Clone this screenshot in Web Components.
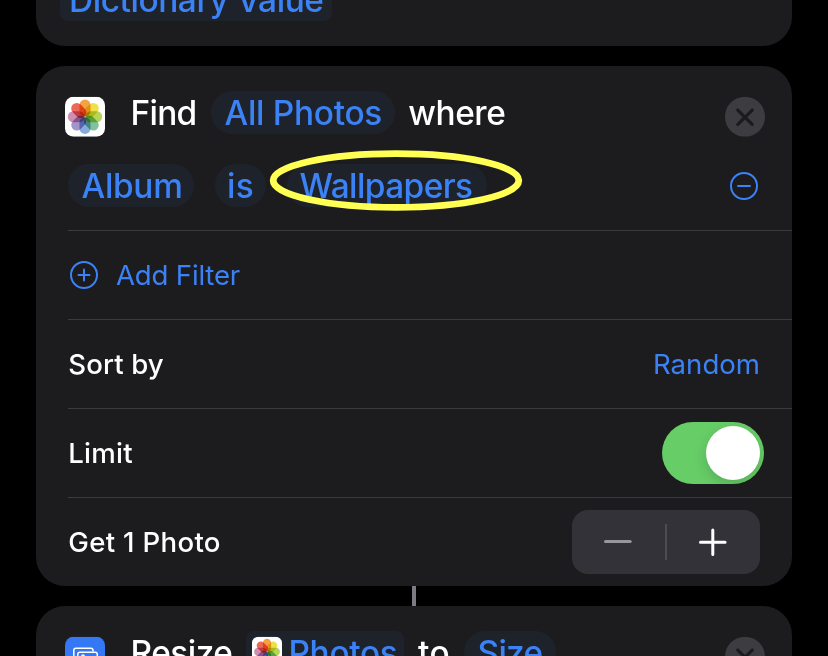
<!DOCTYPE html>
<html lang="en">
<head>
<meta charset="utf-8">
<title>Shortcut editor</title>
<style>
html,body{margin:0;height:100%;overflow:hidden;background:#000}
</style>
</head>
<body>
<shortcut-editor></shortcut-editor>
<script>
function define(name, html, setup) {
  const t = document.createElement('template');
  t.innerHTML = html;
  customElements.define(name, class extends HTMLElement {
    connectedCallback() {
      if (this.shadowRoot) return;
      this.attachShadow({mode: 'open'}).appendChild(t.content.cloneNode(true));
      if (setup) setup(this, this.shadowRoot);
    }
  });
}

/* Single line of text, tracked to fill the width given in "w". */
define('text-run', `
<style>
:host{display:block;white-space:nowrap;flex:none}
span{display:block;white-space:pre}
</style><span></span>`, (el, root) => {
  const s = root.querySelector('span');
  s.textContent = el.getAttribute('text');
  const w = parseFloat(el.getAttribute('w'));
  s.style.width = 'max-content';
  const natural = s.getBoundingClientRect().width;
  s.style.letterSpacing = ((w - natural) / s.textContent.length) + 'px';
  s.style.width = w + 'px';
});

/* Tappable value token. */
define('value-token', `
<style>
:host{display:flex;flex:none;align-items:center;box-sizing:border-box;height:42.5px;padding-left:13.5px;border-radius:21.25px;background:#1e232b;color:#3b82f7;font-weight:460}
:host([square]){border-radius:8px;padding-left:6px}
</style><slot></slot>`);

define('photos-icon', `
<style>
:host{display:block;flex:none;width:40px;height:40px}
svg{display:block;width:100%;height:100%}
.p{mix-blend-mode:multiply}
</style>
<svg viewBox="0 0 40 40"><rect width="40" height="40" rx="8.5" fill="#fff"/><g class="petals" style="isolation:isolate"></g></svg>`, (el, root) => {
  const colors = ['#f3a344','#eee04a','#b7d45c','#7fc29b','#86abdc','#a395c8','#cf8fb5','#ec6858'];
  root.querySelector('.petals').innerHTML = colors.map((c, i) =>
    `<rect class="p" x="14.5" y="2.8" width="11" height="16.8" rx="5.5" fill="${c}" transform="rotate(${i * 45} 20 20)"/>`).join('');
});

define('resize-icon', `
<style>:host{display:block;flex:none;width:40px;height:40px}svg{display:block}</style>
<svg width="40" height="40" viewBox="0 0 40 40"><rect width="40" height="40" rx="8.5" fill="#3478f6"/>
<g fill="none" stroke="#fff" stroke-width="1.5"><path d="M12 26H11a2.2 2.2 0 0 1-2.2-2.2V13.6A2.2 2.2 0 0 1 11 11.4h14.8a2.2 2.2 0 0 1 2.2 2.2v1.2"/><rect x="12.8" y="15.4" width="19.5" height="14" rx="2.2"/><circle cx="18" cy="19.5" r="1.2"/><path d="M13 28l5-4 3 2 5-5 6 5"/></g></svg>`);

define('close-button', `
<style>:host{display:block;flex:none;width:40px;height:40px}svg{display:block}</style>
<svg width="40" height="40" viewBox="0 0 40 40"><circle cx="20" cy="20" r="20" fill="#3d3c41"/><path d="M12.8 13.3l14.4 14.4M27.2 13.3L12.8 27.7" stroke="#1b1b1d" stroke-width="3.2" stroke-linecap="round"/></svg>`);

define('circle-glyph', `
<style>:host{display:block;flex:none;width:28px;height:28px}svg{display:block}:host(:not([plus])) .v{display:none}</style>
<svg width="28" height="28" viewBox="0 0 28 28" fill="none" stroke="#3b82f7" stroke-width="2" stroke-linecap="round"><circle cx="14" cy="14" r="13"/><path class="h" d="M8.5 14h11"/><path class="v" d="M14 8.5v11"/></svg>`, (el, root) => {
  if (!el.hasAttribute('plus')) root.querySelector('.h').setAttribute('d', 'M8 14h12');
});

define('toggle-switch', `
<style>
:host{display:flex;flex:none;justify-content:flex-end;box-sizing:border-box;width:102px;height:62px;padding:4px;border-radius:31px;background:#67ce67;overflow:hidden}
i{width:54px;height:54px;border-radius:50%;background:#fff;box-shadow:0 5px 14px rgba(0,0,0,.16)}
</style><i></i>`);

define('count-stepper', `
<style>:host{display:grid;flex:none;grid-template-columns:93px 2px 93px;align-items:center;justify-items:center;width:188px;height:64px;border-radius:16px;background:#333238}
i{width:2px;height:36px;background:#4d4c52}svg{display:block}</style>
<svg width="93" height="64" fill="none"><path d="M33.5 31.6h24.7" stroke="#98979b" stroke-width="3" stroke-linecap="round"/></svg><i></i>
<svg width="93" height="64" fill="none"><path d="M33.5 32.2h24.6M45.8 19.9v24.6" stroke="#fff" stroke-width="3" stroke-linecap="round"/></svg>`);

define('action-card', `
<style>:host{display:block;flex:none;box-sizing:border-box;width:756px;border-radius:29px;background:#1c1c1e;overflow:hidden}</style><slot></slot>`);

define('setting-row', `
<style>:host{display:flex;box-sizing:border-box;height:89px;margin-left:32px;padding-right:32px;border-top:1px solid #3b3b3e;align-items:center;justify-content:space-between;font-size:27.6px}
div{display:flex;align-items:center}</style><div><slot></slot></div><slot name="end"></slot>`);

define('shortcut-editor', `
<style>
:host{display:flex;flex-direction:column;position:relative;width:828px;height:656px;padding-left:36px;box-sizing:border-box;overflow:hidden;background:#000;color:#fff;font:400 33.4px/40px Inter,"Liberation Sans",sans-serif}
.first{height:46px;display:flex;align-items:flex-end;padding:0 24px 25.5px;border-radius:0 0 29px 29px}
.first value-token{width:272px;padding-left:9px}
.main{height:520px;margin-top:20px}
.head{height:164px;display:grid;grid-template-rows:42.5px 42.5px;row-gap:30.5px;padding:25px 27px 0 29px;box-sizing:border-box}
.line{display:flex;align-items:center}
.tok{display:flex;align-items:center;gap:14px;margin-left:25.5px}
.line text-run,.first text-run{padding-top:1px}
.line close-button,.line circle-glyph{margin-left:auto}
.line>photos-icon,.line>resize-icon,.line>close-button{transform:translateY(4.75px)}
.second{gap:21px;padding:0 5px 0 3px}
.second circle-glyph{margin-right:2px;padding-top:1.5px}
.link{width:4px;height:20px;flex:none;margin-left:376px;background:#7b7b83}
.last{height:180px}
.white{font-weight:450}
setting-row circle-glyph{margin:0 18px 0 2px}
setting-row .white{margin-left:.3px}
.blue{color:#3b82f7}
.mark{position:absolute;left:266px;top:147px}
.mini{width:30px;height:30px;margin-right:6.5px;transform:translateY(-.25px)}
</style>
<action-card class="first"><value-token square><text-run text="Dictionary Value" w="254.5"></text-run></value-token></action-card>
<action-card class="main">
  <div class="head">
    <div class="line"><photos-icon></photos-icon><div class="tok"><text-run class="white" text="Find" w="66"></text-run><value-token style="width:184px;padding-left:14px"><text-run text="All Photos" w="157.5"></text-run></value-token><text-run class="white" text="where" w="97" style="margin-left:-.2px"></text-run></div><close-button></close-button></div>
    <div class="line second"><value-token style="width:126px"><text-run text="Album" w="101"></text-run></value-token><value-token style="width:51px;padding-left:12px"><text-run text="is" w="27"></text-run></value-token><value-token style="width:200px;padding-left:12.5px"><text-run text="Wallpapers" w="173"></text-run></value-token><circle-glyph></circle-glyph></div>
  </div>
  <setting-row><circle-glyph plus></circle-glyph><text-run class="blue" text="Add Filter" w="124"></text-run></setting-row>
  <setting-row><text-run class="white" text="Sort by" w="95.5"></text-run><text-run slot="end" class="blue" text="Random" w="107"></text-run></setting-row>
  <setting-row><text-run class="white" text="Limit" w="64.5"></text-run><toggle-switch slot="end" style="margin-right:-4px"></toggle-switch></setting-row>
  <setting-row><text-run class="white" text="Get 1 Photo" w="152.5"></text-run><count-stepper slot="end"></count-stepper></setting-row>
</action-card>
<div class="link"></div>
<action-card class="last">
  <div class="head">
    <div class="line"><resize-icon></resize-icon><div class="tok"><text-run class="white" text="Resize" w="102"></text-run><value-token square style="width:158px;margin-left:-.5px"><photos-icon class="mini"></photos-icon><text-run text="Photos" w="109"></text-run></value-token><text-run class="white" text="to" w="32"></text-run><value-token style="width:92px"><text-run text="Size" w="65"></text-run></value-token></div><close-button></close-button></div>
  </div>
</action-card>
<svg class="mark" width="260" height="68" viewBox="0 0 260 68"><ellipse cx="130" cy="33.5" rx="122.8" ry="26.8" fill="none" stroke="#ffff54" stroke-width="6.8"/></svg>`);
</script>
</body>
</html>
